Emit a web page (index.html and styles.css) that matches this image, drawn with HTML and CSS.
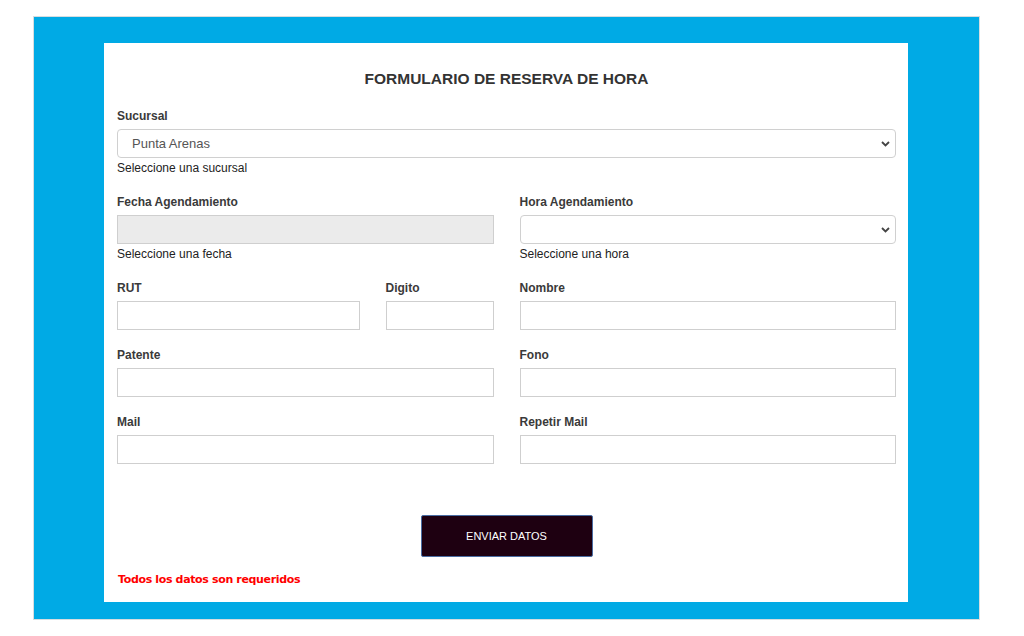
FILE: index.html
```html
<!DOCTYPE html>
<html lang="es">
<head>
<meta charset="utf-8">
<title>Formulario de reserva de hora</title>
<link rel="stylesheet" href="styles.css">
</head>
<body>
<div class="frame">
  <form class="card">
    <h1 class="title">FORMULARIO DE RESERVA DE HORA</h1>

    <div class="row">
      <div class="field">
        <label class="label">Sucursal</label>
        <div class="select-wrap">
          <select class="control select"><option>Punta Arenas</option></select>
          <svg class="chev" width="9" height="6" viewBox="0 0 9 6"><path d="M1 1l3.5 3.5L8 1" fill="none" stroke="#444" stroke-width="1.8"/></svg>
        </div>
        <div class="help">Seleccione una sucursal</div>
      </div>
    </div>

    <div class="row two">
      <div class="field">
        <label class="label">Fecha Agendamiento</label>
        <input class="control disabled" type="text" disabled>
        <div class="help">Seleccione una fecha</div>
      </div>
      <div class="field">
        <label class="label">Hora Agendamiento</label>
        <div class="select-wrap">
          <select class="control select"><option></option></select>
          <svg class="chev" width="9" height="6" viewBox="0 0 9 6"><path d="M1 1l3.5 3.5L8 1" fill="none" stroke="#444" stroke-width="1.8"/></svg>
        </div>
        <div class="help">Seleccione una hora</div>
      </div>
    </div>

    <div class="row two short">
      <div class="rut">
        <div class="field">
          <label class="label">RUT</label>
          <input class="control" type="text">
        </div>
        <div class="field">
          <label class="label">Digito</label>
          <input class="control" type="text">
        </div>
      </div>
      <div class="field">
        <label class="label">Nombre</label>
        <input class="control" type="text">
      </div>
    </div>

    <div class="row two short">
      <div class="field">
        <label class="label">Patente</label>
        <input class="control" type="text">
      </div>
      <div class="field">
        <label class="label">Fono</label>
        <input class="control" type="text">
      </div>
    </div>

    <div class="row two short">
      <div class="field">
        <label class="label">Mail</label>
        <input class="control" type="text">
      </div>
      <div class="field">
        <label class="label">Repetir Mail</label>
        <input class="control" type="text">
      </div>
    </div>

    <div class="actions">
      <button class="submit" type="button">ENVIAR DATOS</button>
    </div>
    <p class="required">Todos los datos son requeridos</p>
  </form>
</div>
</body>
</html>
```

FILE: styles.css
```css
* { box-sizing: border-box; }

html, body {
  margin: 0;
  padding: 0;
  background: #ffffff;
}

body {
  font-family: "Liberation Sans", Arial, sans-serif;
  color: #222;
}

.frame {
  width: 947px;
  margin: 16px 0 0 33px;
  padding: 26px 71px 17px 70px;
  background: #00aae5;
  border: 1px solid #d6dde0;
}

.card {
  background: #ffffff;
  padding: 26px 12px 15px 13px;
  display: flex;
  flex-direction: column;
}

.title {
  margin: 0 0 18px;
  font-size: 15.5px;
  line-height: 20px;
  font-weight: bold;
  color: #333;
  text-align: center;
}

.row { margin-bottom: 17px; }
.row.short { margin-bottom: 16px; }

.two {
  display: grid;
  grid-template-columns: 1fr 1fr;
  column-gap: 26px;
}

.rut {
  display: grid;
  grid-template-columns: 1fr 108px;
  column-gap: 26px;
}

.field {
  display: flex;
  flex-direction: column;
}

.label {
  font-size: 12px;
  line-height: 18px;
  font-weight: bold;
  color: #3a3a3a;
  margin-bottom: 4px;
}

.control {
  display: block;
  width: 100%;
  height: 29px;
  margin: 0;
  border: 1px solid #cfcfcf;
  border-radius: 0;
  background: #fff;
  font-family: "Liberation Sans", Arial, sans-serif;
  font-size: 13px;
  color: #555;
  padding: 0 14px;
  outline: none;
}

.control.disabled {
  background: #ebebeb;
  border-color: #cfcfcf;
}

.select-wrap { position: relative; }

.select {
  -webkit-appearance: none;
  appearance: none;
  border-radius: 4px;
  border-color: #d0d0d0;
}

.chev {
  position: absolute;
  right: 6px;
  top: 12px;
}

.help {
  margin-top: 3px;
  font-size: 12px;
  line-height: 15px;
  color: #222;
}

.actions {
  display: flex;
  justify-content: center;
  margin-top: 35px;
}

.submit {
  width: 172px;
  height: 42px;
  background: #1e0011;
  border: 1px solid #4a6da3;
  border-radius: 2px;
  color: #ffffff;
  font-family: "Liberation Sans", Arial, sans-serif;
  font-size: 11px;
  padding: 0;
}

.required {
  margin: 15px 0 0 1px;
  font-family: "DejaVu Sans", Verdana, sans-serif;
  font-size: 11px;
  letter-spacing: -0.35px;
  line-height: 15px;
  font-weight: bold;
  color: #ff0000;
}
```
